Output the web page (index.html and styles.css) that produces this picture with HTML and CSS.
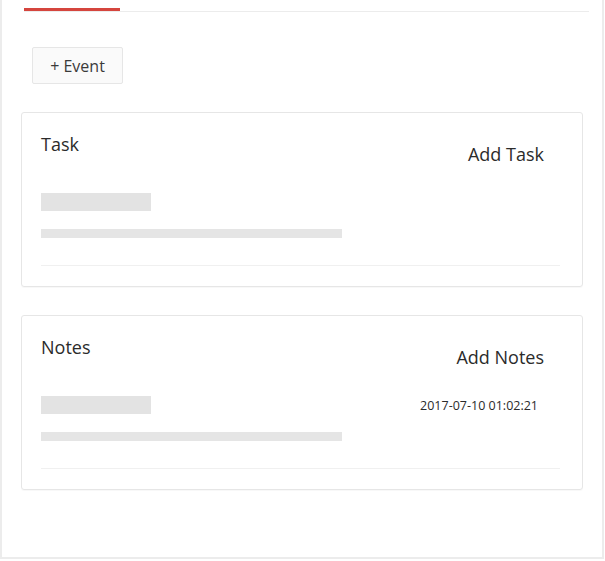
FILE: index.html
```html
<!DOCTYPE html>
<html lang="en">
<head>
    <meta charset="UTF-8">
    <title>Activity</title>
    <link rel="stylesheet" href="styles.css">
</head>
<body>
    <div class="panel">
        <div class="tabs">
            <div class="tab-active"></div>
        </div>

        <button class="event-btn">+ Event</button>

        <section class="card">
            <div class="card-head">
                <h3 class="card-title">Task</h3>
                <a class="card-action" href="#">Add Task</a>
            </div>
            <div class="card-row">
                <div class="skel-block"></div>
            </div>
            <div class="skel-bar"></div>
            <div class="card-divider"></div>
        </section>

        <section class="card">
            <div class="card-head">
                <h3 class="card-title">Notes</h3>
                <a class="card-action" href="#">Add Notes</a>
            </div>
            <div class="card-row">
                <div class="skel-block"></div>
                <span class="card-date">2017-07-10 01:02:21</span>
            </div>
            <div class="skel-bar"></div>
            <div class="card-divider"></div>
        </section>
    </div>
</body>
</html>
```

FILE: styles.css
```css
body {
    margin: 0;
    background-color: #fff;
    font-family: 'Open Sans', sans-serif;
    color: #2b2b2b;
}

.panel {
    box-sizing: border-box;
    height: 559px;
    margin: 0 1px 0 0;
    border: 2px solid #ececec;
    border-top: none;
    padding: 8px 19px 0;
}

.tabs {
    margin: 0 -6px 0 3px;
    border-bottom: 1px solid #ececec;
}

.tab-active {
    width: 96px;
    height: 3px;
    background-color: #d5453e;
}

.event-btn {
    display: block;
    box-sizing: border-box;
    width: 91px;
    height: 37px;
    margin: 35px 0 0 11px;
    padding: 0;
    border: 1px solid #e6e6e6;
    border-radius: 2px;
    background-color: #fafafa;
    font-family: 'Open Sans', sans-serif;
    font-size: 16px;
    color: #3a3a3a;
}

.card {
    margin-top: 28px;
    border: 1px solid #e6e6e6;
    border-radius: 3px;
    padding: 21px 22px 20px 19px;
    box-shadow: 0 1px 1px rgba(0, 0, 0, 0.03);
}

.card-head {
    display: flex;
    justify-content: space-between;
    align-items: flex-start;
    margin-bottom: 29px;
}

.card-title {
    margin: 0;
    font-size: 18px;
    font-weight: 400;
    line-height: 20px;
    color: #2b2b2b;
}

.card-action {
    margin: 10px 16px 0 0;
    font-size: 18px;
    line-height: 20px;
    color: #2b2b2b;
    text-decoration: none;
}

.card-row {
    display: flex;
    justify-content: space-between;
    align-items: center;
}

.skel-block {
    width: 110px;
    height: 18px;
    background-color: #e3e3e3;
}

.card-date {
    margin-right: 22px;
    font-size: 12.5px;
    color: #2b2b2b;
}

.skel-bar {
    width: 301px;
    height: 9px;
    margin-top: 18px;
    background-color: #e5e5e5;
}

.card-divider {
    height: 1px;
    margin-top: 27px;
    background-color: #f0f0f0;
}
```
